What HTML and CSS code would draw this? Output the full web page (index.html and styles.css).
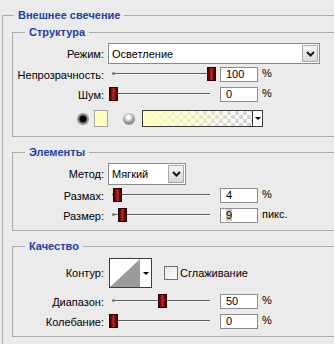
FILE: index.html
```html
<!DOCTYPE html>
<html lang="ru">
<head>
<meta charset="utf-8">
<title>Внешнее свечение</title>
<link rel="stylesheet" href="styles.css">
</head>
<body>
<div class="outer">
  <div class="legend legend-outer">Внешнее свечение</div>

  <div class="group g-struct">
    <div class="legend">Структура</div>
    <div class="row r-select">
      <span class="lbl">Режим:</span>
      <div class="select sel-mode"><span class="sel-text">Осветление</span><span class="sel-btn"><svg width="9" height="6" viewBox="0 0 9 6"><path d="M1 1 L4.5 4.5 L8 1" fill="none" stroke="#1a1a1a" stroke-width="2"/></svg></span></div>
    </div>
    <div class="row r-slider r-gap3">
      <span class="lbl">Непрозрачность:</span>
      <div class="slider"><span class="track"></span><span class="thumb" style="left:99px"></span></div>
      <div class="num">100</div><span class="unit">%</span>
    </div>
    <div class="row r-slider r-gap5">
      <span class="lbl">Шум:</span>
      <div class="slider"><span class="track"></span><span class="thumb" style="left:1px"></span></div>
      <div class="num">0</div><span class="unit">%</span>
    </div>
    <div class="row r-color">
      <span class="radio radio-on"></span>
      <span class="swatch"></span>
      <span class="radio radio-off"></span>
      <div class="gradient"><span class="grad-fill"></span><span class="grad-btn"><span class="tri"></span></span></div>
    </div>
  </div>

  <div class="group g-elem">
    <div class="legend">Элементы</div>
    <div class="row r-select r-select-lg">
      <span class="lbl">Метод:</span>
      <div class="select sel-method"><span class="sel-text">Мягкий</span><span class="sel-btn"><svg width="9" height="6" viewBox="0 0 9 6"><path d="M1 1 L4.5 4.5 L8 1" fill="none" stroke="#1a1a1a" stroke-width="2"/></svg></span></div>
    </div>
    <div class="row r-slider r-gap3">
      <span class="lbl">Размах:</span>
      <div class="slider"><span class="track"></span><span class="thumb" style="left:5px"></span></div>
      <div class="num">4</div><span class="unit">%</span>
    </div>
    <div class="row r-slider r-gap5">
      <span class="lbl">Размер:</span>
      <div class="slider"><span class="track"></span><span class="thumb" style="left:10px"></span></div>
      <div class="num"><span class="sel-txt">9</span></div><span class="unit">пикс.</span>
    </div>
  </div>

  <div class="group g-qual">
    <div class="legend">Качество</div>
    <div class="row r-contour">
      <span class="lbl">Контур:</span>
      <div class="contour">
        <svg class="contour-prev" width="30" height="28" viewBox="0 0 30 28"><rect width="30" height="28" fill="#fff"/><polygon points="0,28 30,0 30,28" fill="#9b9b9b"/></svg>
        <span class="contour-btn"><span class="tri"></span></span>
      </div>
      <span class="check"></span><span class="check-lbl">Сглаживание</span>
    </div>
    <div class="row r-slider r-gap6">
      <span class="lbl">Диапазон:</span>
      <div class="slider"><span class="track"></span><span class="thumb" style="left:50px"></span></div>
      <div class="num">50</div><span class="unit">%</span>
    </div>
    <div class="row r-slider r-gap5">
      <span class="lbl">Колебание:</span>
      <div class="slider"><span class="track"></span><span class="thumb" style="left:1px"></span></div>
      <div class="num">0</div><span class="unit">%</span>
    </div>
  </div>
</div>
</body>
</html>
```
FILE: styles.css
```css
* { box-sizing: border-box; }
html, body { margin: 0; padding: 0; }
body {
  background: #ebebeb;
  font-family: "Liberation Sans", Arial, sans-serif;
  font-size: 11px;
  color: #000;
  width: 334px;
  height: 344px;
  overflow: hidden;
}
.outer {
  margin: 15px 0 0 2px;
  width: 332px;
  height: 329px;
  border-top: 1px solid #ababab;
  border-left: 1px solid #ababab;
  padding: 0 0 0 9px;
}
.legend {
  display: block;
  width: max-content;
  height: 14px;
  line-height: 14px;
  margin: -8px 0 0 12px;
  padding: 0 4px;
  background: #ebebeb;
  color: #1d3eab;
  font-weight: bold;
  font-size: 11px;
}
.legend-outer { margin-left: 2px; }

.group {
  border: 1px solid #ababab;
  border-right: none;
  margin-top: 15px;
}
.g-struct { margin-top: 10px; padding-bottom: 9px; }
.g-elem { padding-bottom: 7px; }
.g-qual { padding-bottom: 7px; }

.row { display: flex; align-items: center; }
.lbl { flex: none; width: 91px; text-align: right; white-space: nowrap; }

.r-select { height: 21px; margin-top: 4px; }
.r-select-lg { height: 22px; }
.r-slider { height: 15px; }
.r-gap3 { margin-top: 3px; }
.r-gap5 { margin-top: 5px; }
.r-gap6 { margin-top: 6px; }

.select {
  display: flex;
  height: 100%;
  margin-left: 4px;
  background: #fff;
  border: 1px solid #8a8a8a;
}
.sel-mode { width: 212px; }
.sel-method { width: 78px; }
.sel-text { flex: 1; padding-left: 3px; line-height: 19px; padding-top: 1px; }
.sel-btn {
  flex: none;
  width: 16px;
  margin: 1px;
  border: 1px solid #a8a8a8;
  background: linear-gradient(#f6f6f6, #d9d9d9);
  display: flex;
  align-items: center;
  justify-content: center;
}

.slider {
  position: relative;
  flex: none;
  width: 108px;
  height: 15px;
  margin-left: 4px;
}
.track {
  position: absolute;
  left: 5px;
  width: 97px;
  top: 6px;
  height: 2px;
  border-top: 1px solid #5e5e5e;
  border-bottom: 1px solid #fafafa;
}
.track::before {
  content: "";
  position: absolute;
  left: -1px;
  top: -2px;
  width: 3px;
  height: 3px;
  border-radius: 50%;
  background: #7a7a7a;
}
.thumb {
  position: absolute;
  top: 0;
  width: 9px;
  height: 14px;
  border: 1px solid #2a0000;
  background: linear-gradient(90deg, #4a0000 0, #7e0a0a 25%, #b52a2a 50%, #7e0a0a 75%, #4a0000 100%);
}
.num {
  flex: none;
  width: 38px;
  height: 15px;
  margin-left: 4px;
  border: 1px solid #8c8c8c;
  background: #fff;
  padding-left: 5px;
  line-height: 13px;
}
.sel-txt { background: #c9c9c9; }
.unit { margin-left: 4px; margin-bottom: 3px; }

.r-color { height: 17px; margin-top: 8px; }
.radio {
  flex: none;
  width: 12px;
  height: 12px;
  border-radius: 50%;
}
.radio-on {
  margin-left: 64px;
  background: radial-gradient(circle at 50% 50%, #000 0, #000 2.6px, #333 3.4px, #8d8d8d 4.6px, #d8d8d8 6px);
  box-shadow: inset 0 0 0 1px #9a9a9a;
}
.radio-off {
  margin-left: 15px;
  background: radial-gradient(circle at 45% 35%, #fff 0, #fff 1.6px, #d4d4d4 3px, #8e8e8e 6px);
}
.swatch {
  flex: none;
  width: 14px;
  height: 17px;
  margin-left: 5px;
  background: #ffffc0;
  border: 1px solid #a3a3a3;
}
.gradient {
  display: flex;
  flex: none;
  width: 121px;
  height: 17px;
  margin-left: 7px;
  border: 1px solid #3a3a3a;
}
.grad-fill {
  flex: 1;
  background:
    linear-gradient(90deg, #ffffbf 0%, rgba(255,255,191,0.6) 40%, rgba(255,255,191,0) 90%),
    repeating-conic-gradient(#d2d2d2 0 25%, #ffffff 0 50%) 0 0 / 8px 8px;
}
.grad-btn {
  flex: none;
  width: 10px;
  background: #fff;
  border-left: 1px solid #3a3a3a;
  display: flex;
  align-items: center;
  justify-content: center;
}
.tri {
  width: 0;
  height: 0;
  border-left: 3px solid transparent;
  border-right: 3px solid transparent;
  border-top: 3px solid #000;
}

.r-contour { height: 30px; margin-top: 5px; }
.contour {
  flex: none;
  display: flex;
  width: 43px;
  height: 30px;
  margin-left: 5px;
  border: 1px solid #3c3c3c;
  background: #fff;
}
.contour-prev { display: block; flex: none; }
.contour-btn {
  flex: 1;
  display: flex;
  align-items: center;
  justify-content: center;
}
.check {
  flex: none;
  width: 14px;
  height: 14px;
  margin-left: 12px;
  border: 1px solid #6f6f6f;
  background: linear-gradient(135deg, #e4e4e4, #ffffff);
}
.check-lbl { margin-left: 2px; }
```
